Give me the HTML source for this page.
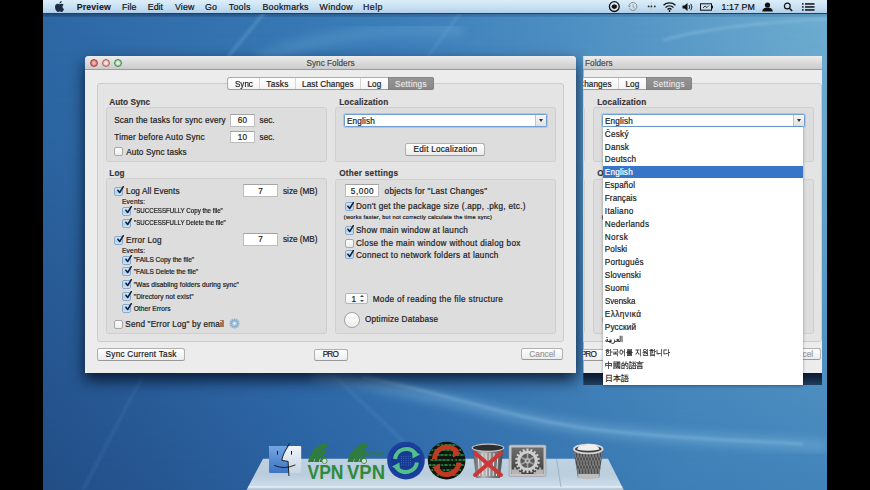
<!DOCTYPE html><html><head><meta charset='utf-8'><style>
html,body{margin:0;padding:0;width:870px;height:490px;overflow:hidden;background:#000}
.a{position:absolute}
.t{position:absolute;white-space:nowrap;font-family:'Liberation Sans',sans-serif;;-webkit-text-stroke:0.2px currentColor}
</style></head><body>
<div class='a' style='left:43px;top:0;width:784px;height:490px;overflow:hidden;background:#2e6aa6'>
<svg class='a' style='left:0;top:0' width='784' height='490'><defs><filter id='bl'><feGaussianBlur stdDeviation='5'/></filter><filter id='bl2'><feGaussianBlur stdDeviation='1.5'/></filter><filter id='bl3'><feGaussianBlur stdDeviation='3'/></filter><linearGradient id='gt' x1='0' y1='0' x2='1' y2='0'><stop offset='0' stop-color='#2d68a5'/><stop offset='0.45' stop-color='#3c7fbb'/><stop offset='0.75' stop-color='#5596c6'/><stop offset='1' stop-color='#6eadd0'/></linearGradient><linearGradient id='gb' x1='0' y1='0' x2='1' y2='0'><stop offset='0' stop-color='#224d85'/><stop offset='0.35' stop-color='#2b63a3'/><stop offset='0.82' stop-color='#3e7fb7'/><stop offset='1' stop-color='#4283ba'/></linearGradient><linearGradient id='gm' x1='0' y1='0' x2='0' y2='1'><stop offset='0' stop-color='#fff' stop-opacity='0'/><stop offset='0.3' stop-color='#fff' stop-opacity='0.15'/><stop offset='1' stop-color='#fff' stop-opacity='1'/></linearGradient><linearGradient id='tops' x1='0' y1='0' x2='1' y2='0'><stop offset='0' stop-color='#163b66' stop-opacity='0.7'/><stop offset='0.5' stop-color='#1d4a78' stop-opacity='0.5'/><stop offset='1' stop-color='#2a5f8a' stop-opacity='0.3'/></linearGradient><mask id='mk'><rect width='784' height='490' fill='url(#gm)'/></mask></defs><rect width='784' height='490' fill='url(#gt)'/><rect width='784' height='490' fill='url(#gb)' mask='url(#mk)'/><path d='M270 374 C380 390 470 420 557 430 S720 442 784 446' stroke='#80b8de' stroke-opacity='0.4' stroke-width='12' fill='none' filter='url(#bl)'/><path d='M320 377 C400 392 470 420 557 430 S700 440 760 444' stroke='#a6d0ea' stroke-opacity='0.35' stroke-width='2.5' fill='none' filter='url(#bl2)'/><path d='M287 372 L380 460' stroke='#6aa6d6' stroke-opacity='0.22' stroke-width='2.5' fill='none' filter='url(#bl2)'/><path d='M100 375 L40 490' stroke='#4d86c4' stroke-opacity='0.3' stroke-width='2.5' fill='none' filter='url(#bl2)'/><rect x='0' y='12' width='784' height='4.5' fill='url(#tops)' filter='url(#bl2)'/><path d='M184 58 L222 12' stroke='#8cc0e6' stroke-opacity='0.35' stroke-width='2.5' fill='none' filter='url(#bl2)'/><path d='M215 60 Q300 25 420 30' stroke='#79b3dc' stroke-opacity='0.25' stroke-width='14' fill='none' filter='url(#bl)'/><path d='M620 40 Q680 24 784 19' stroke='#d5eefa' stroke-opacity='0.45' stroke-width='1.2' fill='none' filter='url(#bl2)'/><path d='M384 58 L418 12' stroke='#8cc0e6' stroke-opacity='0.25' stroke-width='2' fill='none' filter='url(#bl2)'/></svg>
</div>
<div class='a' style='left:43px;top:0px;width:784.00px;height:13.00px;background:linear-gradient(#ddeefa,#c6dff2 60%,#b2cfe8);'></div>
<div class='a' style='left:43px;top:12.6px;width:784.00px;height:1.40px;background:#1f3f66'></div>
<div id='menu'>
<svg class='a' style='left:55.3px;top:1px' width='9' height='11' viewBox='0 0 814 1000'><path fill='#1c2c44' d='M788.1 340.9c-5.8 4.5-108.2 62.2-108.2 190.5 0 148.4 130.3 200.9 134.2 202.2-.6 3.2-20.7 71.9-68.7 141.9-42.8 61.6-87.5 123.1-155.5 123.1s-85.5-39.5-164-39.5c-76.5 0-103.7 40.8-165.9 40.8s-105.6-57-155.5-127C46.7 790.7 0 663 0 541.8c0-194.4 126.4-297.5 250.8-297.5 66.1 0 121.2 43.4 162.7 43.4 39.5 0 101.1-46 176.3-46 28.5 0 130.9 2.6 198.3 99.2zm-234-181.5c31.1-36.9 53.1-88.1 53.1-139.3 0-7.1-.6-14.3-1.9-20.1-50.6 1.9-110.8 33.7-147.1 75.8-28.5 32.4-55.1 83.6-55.1 135.5 0 7.8 1.3 15.6 1.9 18.1 3.2.6 8.4 1.3 13.6 1.3 45.4 0 102.5-30.4 135.5-71.3z'/></svg>
<div class='t' style='left:76.7px;top:3.00px;font-size:8.8px;line-height:8.8px;font-weight:700;color:#1a1a1a;letter-spacing:0.139px;-webkit-text-stroke:0.1px currentColor;'>Preview</div>
<div class='t' style='left:122px;top:3.00px;font-size:8.8px;line-height:8.8px;font-weight:400;color:#111;letter-spacing:0.104px;'>File</div>
<div class='t' style='left:147.8px;top:3.00px;font-size:8.8px;line-height:8.8px;font-weight:400;color:#111;letter-spacing:0.009px;'>Edit</div>
<div class='t' style='left:175px;top:3.00px;font-size:8.8px;line-height:8.8px;font-weight:400;color:#111;letter-spacing:0.126px;'>View</div>
<div class='t' style='left:205px;top:3.00px;font-size:8.8px;line-height:8.8px;font-weight:400;color:#111;letter-spacing:0.250px;'>Go</div>
<div class='t' style='left:228.7px;top:3.00px;font-size:8.8px;line-height:8.8px;font-weight:400;color:#111;letter-spacing:0.313px;'>Tools</div>
<div class='t' style='left:262.5px;top:3.00px;font-size:8.8px;line-height:8.8px;font-weight:400;color:#111;letter-spacing:0.250px;'>Bookmarks</div>
<div class='t' style='left:319.5px;top:3.00px;font-size:8.8px;line-height:8.8px;font-weight:400;color:#111;letter-spacing:0.341px;'>Window</div>
<div class='t' style='left:363px;top:3.00px;font-size:8.8px;line-height:8.8px;font-weight:400;color:#111;letter-spacing:0.469px;'>Help</div>
<div class='t' style='left:721.6px;top:3.00px;font-size:8.8px;line-height:8.8px;font-weight:400;color:#111;letter-spacing:0.089px;'>1:17 PM</div>
</div>
<div class='a' style='left:0;top:0;width:870px;height:490px'>
<div class='a' style='left:85px;top:56px;width:491.00px;height:316.60px;box-shadow:0 7px 15px rgba(0,8,25,0.8);border-radius:4px 4px 0 0'></div>
<div class='a' style='left:85px;top:56px;width:491.00px;height:316.60px;background:#ececec;border-radius:4px 4px 0 0;overflow:hidden'></div>
<div class='a' style='left:85px;top:56px;width:491.00px;height:13.30px;background:linear-gradient(#ececec,#dadada 55%,#cbcbcb);border-radius:4px 4px 0 0'></div>
<div class='a' style='left:85px;top:69.3px;width:491.00px;height:0.90px;background:#9a9a9a'></div>
<div class='a' style='left:89.9px;top:59.1px;width:8px;height:8px;border-radius:50%;box-sizing:border-box;border:0.9px solid #a8443e;background:radial-gradient(circle at 50% 50%,#eab4b0 0,#eab4b0 25%,#d0605a 80%)'></div>
<div class='a' style='left:102px;top:59.1px;width:8px;height:8px;border-radius:50%;box-sizing:border-box;border:0.9px solid #b0625c;background:radial-gradient(circle at 50% 50%,#f4e4e2 0,#f4e4e2 25%,#dc9a94 80%)'></div>
<div class='a' style='left:114.4px;top:59.1px;width:8px;height:8px;border-radius:50%;box-sizing:border-box;border:0.9px solid #3f8a4a;background:radial-gradient(circle at 50% 50%,#e4f0e6 0,#e4f0e6 25%,#86bc92 80%)'></div>
<div class='t' style='left:306.5px;top:60.00px;font-size:8.2px;line-height:8.2px;font-weight:400;color:#4a4a4a;letter-spacing:0.020px;'>Sync Folders</div>
<div class='a' style='left:97.2px;top:83.3px;width:466.60px;height:258.30px;background:#e4e4e4;border:1px solid #cdcdcd;border-radius:3px;box-sizing:border-box'></div>
<div class='a' style='left:227px;top:77.2px;width:207.00px;height:12.40px;background:linear-gradient(#ffffff,#f3f3f3);border:1px solid #ababab;border-bottom-color:#9c9c9c;border-radius:3px;box-sizing:border-box'></div>
<div class='a' style='left:388px;top:77.2px;width:46.00px;height:12.40px;background:linear-gradient(#969696,#868686);border-radius:0 3px 3px 0;box-shadow:inset 0 0 0 0.6px #7a7a7a'></div>
<div class='a' style='left:259px;top:78.4px;width:0.80px;height:10.20px;background:#d6d6d6'></div>
<div class='a' style='left:295px;top:78.4px;width:0.80px;height:10.20px;background:#d6d6d6'></div>
<div class='a' style='left:360px;top:78.4px;width:0.80px;height:10.20px;background:#d6d6d6'></div>
<div class='t' style='left:234.7px;top:81.00px;font-size:8.2px;line-height:8.2px;font-weight:400;color:#1c1c1c;letter-spacing:0.000px;transform:scaleX(0.9833);transform-origin:0 0;'>Sync</div>
<div class='t' style='left:266.3px;top:81.00px;font-size:8.2px;line-height:8.2px;font-weight:400;color:#1c1c1c;letter-spacing:0.266px;'>Tasks</div>
<div class='t' style='left:302px;top:81.00px;font-size:8.2px;line-height:8.2px;font-weight:400;color:#1c1c1c;letter-spacing:0.088px;'>Last Changes</div>
<div class='t' style='left:367.4px;top:81.00px;font-size:8.2px;line-height:8.2px;font-weight:400;color:#1c1c1c;letter-spacing:0.114px;'>Log</div>
<div class='t' style='left:395px;top:81.00px;font-size:8.2px;line-height:8.2px;font-weight:400;color:#eeeeee;letter-spacing:0.272px;-webkit-text-stroke:0.1px currentColor;'>Settings</div>
<div class='t' style='left:109.3px;top:99.00px;font-size:8.2px;line-height:8.2px;font-weight:700;color:#333333;letter-spacing:0.037px;-webkit-text-stroke:0.15px currentColor;'>Auto Sync</div>
<div class='a' style='left:105.5px;top:106.8px;width:221.10px;height:55.40px;background:#dddddd;border:1px solid #cfcfcf;border-radius:2.5px;box-sizing:border-box'></div>
<div class='t' style='left:114.2px;top:117.00px;font-size:8.2px;line-height:8.2px;font-weight:400;color:#1c1c1c;letter-spacing:0.163px;'>Scan the tasks for sync every</div>
<div class='a' style='left:230px;top:113.8px;width:24.70px;height:12.90px;background:#fff;border:1px solid #bdbdbd;border-top-color:#a3a3a3;box-sizing:border-box'></div>
<div class='t' style='left:230px;width:24.69999999999999px;text-align:center;top:117.00px;font-size:8.2px;line-height:8.2px;font-weight:400;color:#1c1c1c;letter-spacing:0.200px;text-indent:0.200px'>60</div>
<div class='t' style='left:259.6px;top:117.00px;font-size:8.2px;line-height:8.2px;font-weight:400;color:#1c1c1c;letter-spacing:-0.044px;'>sec.</div>
<div class='t' style='left:114.2px;top:134.00px;font-size:8.2px;line-height:8.2px;font-weight:400;color:#1c1c1c;letter-spacing:0.250px;'>Timer before Auto Sync</div>
<div class='a' style='left:230px;top:130.5px;width:24.70px;height:12.90px;background:#fff;border:1px solid #bdbdbd;border-top-color:#a3a3a3;box-sizing:border-box'></div>
<div class='t' style='left:230px;width:24.69999999999999px;text-align:center;top:134.00px;font-size:8.2px;line-height:8.2px;font-weight:400;color:#1c1c1c;letter-spacing:0.200px;text-indent:0.200px'>10</div>
<div class='t' style='left:259.6px;top:134.00px;font-size:8.2px;line-height:8.2px;font-weight:400;color:#1c1c1c;letter-spacing:-0.044px;'>sec.</div>
<div class='a' style='left:114.3px;top:147.3px;width:9px;height:9px;box-sizing:border-box;border:0.8px solid #a8a8a8;border-radius:2px;background:linear-gradient(#fdfdfd,#ececec)'></div>
<div class='t' style='left:126.2px;top:149.00px;font-size:8.2px;line-height:8.2px;font-weight:400;color:#1c1c1c;letter-spacing:0.127px;'>Auto Sync tasks</div>
<div class='t' style='left:339.2px;top:99.00px;font-size:8.2px;line-height:8.2px;font-weight:700;color:#333333;letter-spacing:0.153px;-webkit-text-stroke:0.15px currentColor;'>Localization</div>
<div class='a' style='left:334.5px;top:106.8px;width:221.40px;height:55.40px;background:#dddddd;border:1px solid #cfcfcf;border-radius:2.5px;box-sizing:border-box'></div>
<div class='a' style='left:344.2px;top:114.2px;width:202.40px;height:12.80px;background:#fff;border:1px solid #6f9fd4;box-shadow:0 0 0 1px #a9c8ea;border-radius:1.5px;box-sizing:border-box'></div>
<div class='a' style='left:536.1px;top:115.2px;width:9.50px;height:10.80px;background:linear-gradient(#f6f6f6,#e2e2e2)'></div>
<div class='a' style='left:535.3px;top:115.2px;width:0.80px;height:10.80px;background:#c4c4c4'></div>
<div class='t' style='left:347px;top:118.00px;font-size:8.2px;line-height:8.2px;font-weight:400;color:#1c1c1c;letter-spacing:0.157px;'>English</div>
<div class='a' style='left:539px;top:119.3px;width:0;height:0;border-left:2.6px solid transparent;border-right:2.6px solid transparent;border-top:3.4px solid #333'></div>
<div class='a' style='left:405.3px;top:142.5px;width:80.10px;height:13.00px;background:linear-gradient(#ffffff,#f5f5f5 50%,#ececec);border:1px solid #b0b0b0;border-bottom-color:#999;border-radius:2.5px;box-sizing:border-box'></div>
<div class='t' style='left:405.3px;width:80.09999999999997px;text-align:center;top:146.00px;font-size:8.2px;line-height:8.2px;font-weight:400;color:#1c1c1c;letter-spacing:0.242px;text-indent:0.242px'>Edit Localization</div>
<div class='t' style='left:109.3px;top:170.00px;font-size:8.2px;line-height:8.2px;font-weight:700;color:#333333;letter-spacing:0.092px;-webkit-text-stroke:0.15px currentColor;'>Log</div>
<div class='a' style='left:105.5px;top:178px;width:221.10px;height:155.80px;background:#dddddd;border:1px solid #cfcfcf;border-radius:2.5px;box-sizing:border-box'></div>
<div class='a' style='left:114.3px;top:186.6px;width:9px;height:9px;box-sizing:border-box;border:0.8px solid #88a8cc;border-radius:2px;background:linear-gradient(#d4e6f6,#b5d2ee 60%,#cfe4f7)'><svg width='12' height='12' viewBox='0 0 12 12' style='position:absolute;left:-0.8px;top:-0.8px;overflow:visible'><path d='M2.9 3.2 L4.7 5.5 L8.3 -0.3' fill='none' stroke='#13213a' stroke-width='1.55' stroke-linecap='round' stroke-linejoin='round'/></svg></div>
<div class='t' style='left:126px;top:188.00px;font-size:8.2px;line-height:8.2px;font-weight:400;color:#1c1c1c;letter-spacing:0.124px;'>Log All Events</div>
<div class='a' style='left:243.4px;top:184.3px;width:34.20px;height:12.90px;background:#fff;border:1px solid #bdbdbd;border-top-color:#a3a3a3;box-sizing:border-box'></div>
<div class='t' style='left:243.4px;width:34.20000000000002px;text-align:center;top:188.00px;font-size:8.2px;line-height:8.2px;font-weight:400;color:#1c1c1c;letter-spacing:0.200px;text-indent:0.200px'>7</div>
<div class='t' style='left:283px;top:188.00px;font-size:8.2px;line-height:8.2px;font-weight:400;color:#1c1c1c;letter-spacing:-0.010px;'>size (MB)</div>
<div class='t' style='left:122px;top:199.00px;font-size:6.6px;line-height:6.6px;font-weight:400;color:#1c1c1c;letter-spacing:0.200px;'>Events:</div>
<div class='a' style='left:122.3px;top:207.1px;width:9px;height:9px;box-sizing:border-box;border:0.8px solid #88a8cc;border-radius:2px;background:linear-gradient(#d4e6f6,#b5d2ee 60%,#cfe4f7)'><svg width='12' height='12' viewBox='0 0 12 12' style='position:absolute;left:-0.8px;top:-0.8px;overflow:visible'><path d='M2.9 3.2 L4.7 5.5 L8.3 -0.3' fill='none' stroke='#13213a' stroke-width='1.55' stroke-linecap='round' stroke-linejoin='round'/></svg></div>
<div class='t' style='left:133.7px;top:208.00px;font-size:6.6px;line-height:6.6px;font-weight:400;color:#1c1c1c;letter-spacing:0.000px;transform:scaleX(0.9350);transform-origin:0 0;'>"SUCCESSFULLY Copy the file"</div>
<div class='a' style='left:122.3px;top:219px;width:9px;height:9px;box-sizing:border-box;border:0.8px solid #88a8cc;border-radius:2px;background:linear-gradient(#d4e6f6,#b5d2ee 60%,#cfe4f7)'><svg width='12' height='12' viewBox='0 0 12 12' style='position:absolute;left:-0.8px;top:-0.8px;overflow:visible'><path d='M2.9 3.2 L4.7 5.5 L8.3 -0.3' fill='none' stroke='#13213a' stroke-width='1.55' stroke-linecap='round' stroke-linejoin='round'/></svg></div>
<div class='t' style='left:133.7px;top:220.00px;font-size:6.6px;line-height:6.6px;font-weight:400;color:#1c1c1c;letter-spacing:0.000px;transform:scaleX(0.9308);transform-origin:0 0;'>"SUCCESSFULLY Delete the file"</div>
<div class='a' style='left:114.3px;top:235.7px;width:9px;height:9px;box-sizing:border-box;border:0.8px solid #88a8cc;border-radius:2px;background:linear-gradient(#d4e6f6,#b5d2ee 60%,#cfe4f7)'><svg width='12' height='12' viewBox='0 0 12 12' style='position:absolute;left:-0.8px;top:-0.8px;overflow:visible'><path d='M2.9 3.2 L4.7 5.5 L8.3 -0.3' fill='none' stroke='#13213a' stroke-width='1.55' stroke-linecap='round' stroke-linejoin='round'/></svg></div>
<div class='t' style='left:126px;top:237.00px;font-size:8.2px;line-height:8.2px;font-weight:400;color:#1c1c1c;letter-spacing:0.170px;'>Error Log</div>
<div class='a' style='left:243.4px;top:233px;width:34.20px;height:12.80px;background:#fff;border:1px solid #bdbdbd;border-top-color:#a3a3a3;box-sizing:border-box'></div>
<div class='t' style='left:243.4px;width:34.20000000000002px;text-align:center;top:236.00px;font-size:8.2px;line-height:8.2px;font-weight:400;color:#1c1c1c;letter-spacing:0.200px;text-indent:0.200px'>7</div>
<div class='t' style='left:283px;top:236.00px;font-size:8.2px;line-height:8.2px;font-weight:400;color:#1c1c1c;letter-spacing:-0.010px;'>size (MB)</div>
<div class='t' style='left:122px;top:248.00px;font-size:6.6px;line-height:6.6px;font-weight:400;color:#1c1c1c;letter-spacing:0.200px;'>Events:</div>
<div class='a' style='left:122.3px;top:255.79999999999998px;width:9px;height:9px;box-sizing:border-box;border:0.8px solid #88a8cc;border-radius:2px;background:linear-gradient(#d4e6f6,#b5d2ee 60%,#cfe4f7)'><svg width='12' height='12' viewBox='0 0 12 12' style='position:absolute;left:-0.8px;top:-0.8px;overflow:visible'><path d='M2.9 3.2 L4.7 5.5 L8.3 -0.3' fill='none' stroke='#13213a' stroke-width='1.55' stroke-linecap='round' stroke-linejoin='round'/></svg></div>
<div class='t' style='left:133.7px;top:257.00px;font-size:6.6px;line-height:6.6px;font-weight:400;color:#1c1c1c;letter-spacing:-0.031px;'>"FAILS Copy the file"</div>
<div class='a' style='left:122.3px;top:267.0px;width:9px;height:9px;box-sizing:border-box;border:0.8px solid #88a8cc;border-radius:2px;background:linear-gradient(#d4e6f6,#b5d2ee 60%,#cfe4f7)'><svg width='12' height='12' viewBox='0 0 12 12' style='position:absolute;left:-0.8px;top:-0.8px;overflow:visible'><path d='M2.9 3.2 L4.7 5.5 L8.3 -0.3' fill='none' stroke='#13213a' stroke-width='1.55' stroke-linecap='round' stroke-linejoin='round'/></svg></div>
<div class='t' style='left:133.7px;top:269.00px;font-size:6.6px;line-height:6.6px;font-weight:400;color:#1c1c1c;letter-spacing:-0.013px;'>"FAILS Delete the file"</div>
<div class='a' style='left:122.3px;top:280.09999999999997px;width:9px;height:9px;box-sizing:border-box;border:0.8px solid #88a8cc;border-radius:2px;background:linear-gradient(#d4e6f6,#b5d2ee 60%,#cfe4f7)'><svg width='12' height='12' viewBox='0 0 12 12' style='position:absolute;left:-0.8px;top:-0.8px;overflow:visible'><path d='M2.9 3.2 L4.7 5.5 L8.3 -0.3' fill='none' stroke='#13213a' stroke-width='1.55' stroke-linecap='round' stroke-linejoin='round'/></svg></div>
<div class='t' style='left:133.7px;top:282.00px;font-size:6.6px;line-height:6.6px;font-weight:400;color:#1c1c1c;letter-spacing:0.074px;'>"Was disabling folders during sync"</div>
<div class='a' style='left:122.3px;top:292.0px;width:9px;height:9px;box-sizing:border-box;border:0.8px solid #88a8cc;border-radius:2px;background:linear-gradient(#d4e6f6,#b5d2ee 60%,#cfe4f7)'><svg width='12' height='12' viewBox='0 0 12 12' style='position:absolute;left:-0.8px;top:-0.8px;overflow:visible'><path d='M2.9 3.2 L4.7 5.5 L8.3 -0.3' fill='none' stroke='#13213a' stroke-width='1.55' stroke-linecap='round' stroke-linejoin='round'/></svg></div>
<div class='t' style='left:133.7px;top:294.00px;font-size:6.6px;line-height:6.6px;font-weight:400;color:#1c1c1c;letter-spacing:0.117px;'>"Directory not exist"</div>
<div class='a' style='left:122.3px;top:304.09999999999997px;width:9px;height:9px;box-sizing:border-box;border:0.8px solid #88a8cc;border-radius:2px;background:linear-gradient(#d4e6f6,#b5d2ee 60%,#cfe4f7)'><svg width='12' height='12' viewBox='0 0 12 12' style='position:absolute;left:-0.8px;top:-0.8px;overflow:visible'><path d='M2.9 3.2 L4.7 5.5 L8.3 -0.3' fill='none' stroke='#13213a' stroke-width='1.55' stroke-linecap='round' stroke-linejoin='round'/></svg></div>
<div class='t' style='left:133.7px;top:306.00px;font-size:6.6px;line-height:6.6px;font-weight:400;color:#1c1c1c;letter-spacing:0.047px;'>Other Errors</div>
<div class='a' style='left:114.3px;top:319.5px;width:9px;height:9px;box-sizing:border-box;border:0.8px solid #a8a8a8;border-radius:2px;background:linear-gradient(#fdfdfd,#ececec)'></div>
<div class='t' style='left:125.3px;top:321.00px;font-size:8.2px;line-height:8.2px;font-weight:400;color:#1c1c1c;letter-spacing:0.183px;'>Send "Error Log" by email</div>
<svg class='a' style='left:228.6px;top:318.2px' width='11' height='11' viewBox='0 0 22 22'><g fill='#8db1d5'><circle cx='11' cy='11' r='8'/><rect x='9.7' y='0.6' width='2.6' height='4.5' transform='rotate(0 11 11)'/><rect x='9.7' y='0.6' width='2.6' height='4.5' transform='rotate(30 11 11)'/><rect x='9.7' y='0.6' width='2.6' height='4.5' transform='rotate(60 11 11)'/><rect x='9.7' y='0.6' width='2.6' height='4.5' transform='rotate(90 11 11)'/><rect x='9.7' y='0.6' width='2.6' height='4.5' transform='rotate(120 11 11)'/><rect x='9.7' y='0.6' width='2.6' height='4.5' transform='rotate(150 11 11)'/><rect x='9.7' y='0.6' width='2.6' height='4.5' transform='rotate(180 11 11)'/><rect x='9.7' y='0.6' width='2.6' height='4.5' transform='rotate(210 11 11)'/><rect x='9.7' y='0.6' width='2.6' height='4.5' transform='rotate(240 11 11)'/><rect x='9.7' y='0.6' width='2.6' height='4.5' transform='rotate(270 11 11)'/><rect x='9.7' y='0.6' width='2.6' height='4.5' transform='rotate(300 11 11)'/><rect x='9.7' y='0.6' width='2.6' height='4.5' transform='rotate(330 11 11)'/></g><circle cx='11' cy='11' r='5' fill='#a9c6e2'/><circle cx='11' cy='11' r='2.4' fill='#eef4fa'/></svg>
<div class='t' style='left:339.2px;top:170.00px;font-size:8.2px;line-height:8.2px;font-weight:700;color:#333333;letter-spacing:0.253px;-webkit-text-stroke:0.15px currentColor;'>Other settings</div>
<div class='a' style='left:334.5px;top:178.7px;width:221.40px;height:155.60px;background:#dddddd;border:1px solid #cfcfcf;border-radius:2.5px;box-sizing:border-box'></div>
<div class='a' style='left:345px;top:184.4px;width:34.40px;height:13.00px;background:#fff;border:1px solid #bdbdbd;border-top-color:#a3a3a3;box-sizing:border-box'></div>
<div class='t' style='left:345px;width:34.39999999999998px;text-align:center;top:188.00px;font-size:8.2px;line-height:8.2px;font-weight:400;color:#1c1c1c;letter-spacing:0.575px;text-indent:0.575px'>5,000</div>
<div class='t' style='left:384.6px;top:188.00px;font-size:8.2px;line-height:8.2px;font-weight:400;color:#1c1c1c;letter-spacing:0.244px;'>objects for "Last Changes"</div>
<div class='a' style='left:345px;top:202.4px;width:9px;height:9px;box-sizing:border-box;border:0.8px solid #88a8cc;border-radius:2px;background:linear-gradient(#d4e6f6,#b5d2ee 60%,#cfe4f7)'><svg width='12' height='12' viewBox='0 0 12 12' style='position:absolute;left:-0.8px;top:-0.8px;overflow:visible'><path d='M2.9 3.2 L4.7 5.5 L8.3 -0.3' fill='none' stroke='#13213a' stroke-width='1.55' stroke-linecap='round' stroke-linejoin='round'/></svg></div>
<div class='t' style='left:355.9px;top:203.00px;font-size:8.2px;line-height:8.2px;font-weight:400;color:#1c1c1c;letter-spacing:0.269px;'>Don't get the package size (.app, .pkg, etc.)</div>
<div class='t' style='left:343.8px;top:215.00px;font-size:5.6px;line-height:5.6px;font-weight:400;color:#1c1c1c;letter-spacing:0.242px;'>(works faster, but not correctly calculate the time sync)</div>
<div class='a' style='left:345px;top:225.8px;width:9px;height:9px;box-sizing:border-box;border:0.8px solid #88a8cc;border-radius:2px;background:linear-gradient(#d4e6f6,#b5d2ee 60%,#cfe4f7)'><svg width='12' height='12' viewBox='0 0 12 12' style='position:absolute;left:-0.8px;top:-0.8px;overflow:visible'><path d='M2.9 3.2 L4.7 5.5 L8.3 -0.3' fill='none' stroke='#13213a' stroke-width='1.55' stroke-linecap='round' stroke-linejoin='round'/></svg></div>
<div class='t' style='left:355.9px;top:227.00px;font-size:8.2px;line-height:8.2px;font-weight:400;color:#1c1c1c;letter-spacing:0.256px;'>Show main window at launch</div>
<div class='a' style='left:344.8px;top:238.6px;width:9px;height:9px;box-sizing:border-box;border:0.8px solid #a8a8a8;border-radius:2px;background:linear-gradient(#fdfdfd,#ececec)'></div>
<div class='t' style='left:355.9px;top:240.00px;font-size:8.2px;line-height:8.2px;font-weight:400;color:#1c1c1c;letter-spacing:0.320px;'>Close the main window without dialog box</div>
<div class='a' style='left:345px;top:250.4px;width:9px;height:9px;box-sizing:border-box;border:0.8px solid #88a8cc;border-radius:2px;background:linear-gradient(#d4e6f6,#b5d2ee 60%,#cfe4f7)'><svg width='12' height='12' viewBox='0 0 12 12' style='position:absolute;left:-0.8px;top:-0.8px;overflow:visible'><path d='M2.9 3.2 L4.7 5.5 L8.3 -0.3' fill='none' stroke='#13213a' stroke-width='1.55' stroke-linecap='round' stroke-linejoin='round'/></svg></div>
<div class='t' style='left:355.9px;top:252.00px;font-size:8.2px;line-height:8.2px;font-weight:400;color:#1c1c1c;letter-spacing:0.274px;'>Connect to network folders at launch</div>
<div class='a' style='left:345px;top:293.3px;width:23.00px;height:11.10px;background:linear-gradient(#fff,#f2f2f2);border:1px solid #b5b5b5;border-radius:2px;box-sizing:border-box'></div>
<div class='t' style='left:351.5px;top:296.00px;font-size:8.2px;line-height:8.2px;font-weight:400;color:#1c1c1c;letter-spacing:0.200px;'>1</div>
<div class='a' style='left:359.5px;top:295.3px;width:0;height:0;border-left:2px solid transparent;border-right:2px solid transparent;border-bottom:2.6px solid #444'></div>
<div class='a' style='left:359.5px;top:299.6px;width:0;height:0;border-left:2px solid transparent;border-right:2px solid transparent;border-top:2.6px solid #444'></div>
<div class='t' style='left:372.7px;top:296.00px;font-size:8.2px;line-height:8.2px;font-weight:400;color:#1c1c1c;letter-spacing:0.318px;'>Mode of reading the file structure</div>
<div class='a' style='left:344px;top:311.8px;width:15.8px;height:15.8px;border-radius:50%;background:linear-gradient(#ffffff,#eeeeee);border:0.8px solid #a0a0a0;box-sizing:border-box'></div>
<div class='t' style='left:365px;top:316.00px;font-size:8.2px;line-height:8.2px;font-weight:400;color:#1c1c1c;letter-spacing:0.216px;'>Optimize Database</div>
<div class='a' style='left:97.2px;top:348px;width:87.60px;height:12.60px;background:linear-gradient(#ffffff,#f5f5f5 50%,#ececec);border:1px solid #b0b0b0;border-bottom-color:#999;border-radius:2.5px;box-sizing:border-box'></div>
<div class='t' style='left:97.2px;width:87.60000000000001px;text-align:center;top:351.00px;font-size:8.2px;line-height:8.2px;font-weight:400;color:#1c1c1c;letter-spacing:0.253px;text-indent:0.253px'>Sync Current Task</div>
<div class='a' style='left:314px;top:348.5px;width:33.50px;height:12.00px;background:linear-gradient(#ffffff,#f5f5f5 50%,#ececec);border:1px solid #b0b0b0;border-bottom-color:#999;border-radius:2.5px;box-sizing:border-box'></div>
<div class='t' style='left:314px;width:33.5px;text-align:center;top:351.00px;font-size:8.2px;line-height:8.2px;font-weight:400;color:#1c1c1c;letter-spacing:-0.825px;text-indent:-0.825px'>PRO</div>
<div class='a' style='left:521px;top:348.3px;width:42.40px;height:12.00px;background:linear-gradient(#ffffff,#f5f5f5 50%,#ececec);border:1px solid #b0b0b0;border-bottom-color:#999;border-radius:2.5px;box-sizing:border-box'></div>
<div class='t' style='left:521px;width:42.39999999999998px;text-align:center;top:351.00px;font-size:8.2px;line-height:8.2px;font-weight:400;color:#9a9a9a;letter-spacing:0.080px;text-indent:0.080px'>Cancel</div>
</div>
<div class='a' style='left:0;top:0;width:870px;height:490px;clip-path:inset(56px 48px 105px 583.4px);background:linear-gradient(#1e3c5d 373px,#2a4f72 385px)'>
<div class='a' style='left:258px;top:0;width:870px;height:490px'>
<div class='a' style='left:85px;top:56px;width:491.00px;height:316.60px;box-shadow:0 7px 15px rgba(0,8,25,0.8);border-radius:4px 4px 0 0'></div>
<div class='a' style='left:85px;top:56px;width:491.00px;height:316.60px;background:#ececec;border-radius:4px 4px 0 0;overflow:hidden'></div>
<div class='a' style='left:85px;top:56px;width:491.00px;height:13.30px;background:linear-gradient(#ececec,#dadada 55%,#cbcbcb);border-radius:4px 4px 0 0'></div>
<div class='a' style='left:85px;top:69.3px;width:491.00px;height:0.90px;background:#9a9a9a'></div>
<div class='a' style='left:89.9px;top:59.1px;width:8px;height:8px;border-radius:50%;box-sizing:border-box;border:0.9px solid #a8443e;background:radial-gradient(circle at 50% 50%,#eab4b0 0,#eab4b0 25%,#d0605a 80%)'></div>
<div class='a' style='left:102px;top:59.1px;width:8px;height:8px;border-radius:50%;box-sizing:border-box;border:0.9px solid #b0625c;background:radial-gradient(circle at 50% 50%,#f4e4e2 0,#f4e4e2 25%,#dc9a94 80%)'></div>
<div class='a' style='left:114.4px;top:59.1px;width:8px;height:8px;border-radius:50%;box-sizing:border-box;border:0.9px solid #3f8a4a;background:radial-gradient(circle at 50% 50%,#e4f0e6 0,#e4f0e6 25%,#86bc92 80%)'></div>
<div class='t' style='left:306.5px;top:60.00px;font-size:8.2px;line-height:8.2px;font-weight:400;color:#4a4a4a;letter-spacing:0.020px;'>Sync Folders</div>
<div class='a' style='left:97.2px;top:83.3px;width:466.60px;height:258.30px;background:#e4e4e4;border:1px solid #cdcdcd;border-radius:3px;box-sizing:border-box'></div>
<div class='a' style='left:227px;top:77.2px;width:207.00px;height:12.40px;background:linear-gradient(#ffffff,#f3f3f3);border:1px solid #ababab;border-bottom-color:#9c9c9c;border-radius:3px;box-sizing:border-box'></div>
<div class='a' style='left:388px;top:77.2px;width:46.00px;height:12.40px;background:linear-gradient(#969696,#868686);border-radius:0 3px 3px 0;box-shadow:inset 0 0 0 0.6px #7a7a7a'></div>
<div class='a' style='left:259px;top:78.4px;width:0.80px;height:10.20px;background:#d6d6d6'></div>
<div class='a' style='left:295px;top:78.4px;width:0.80px;height:10.20px;background:#d6d6d6'></div>
<div class='a' style='left:360px;top:78.4px;width:0.80px;height:10.20px;background:#d6d6d6'></div>
<div class='t' style='left:234.7px;top:81.00px;font-size:8.2px;line-height:8.2px;font-weight:400;color:#1c1c1c;letter-spacing:0.000px;transform:scaleX(0.9833);transform-origin:0 0;'>Sync</div>
<div class='t' style='left:266.3px;top:81.00px;font-size:8.2px;line-height:8.2px;font-weight:400;color:#1c1c1c;letter-spacing:0.266px;'>Tasks</div>
<div class='t' style='left:302px;top:81.00px;font-size:8.2px;line-height:8.2px;font-weight:400;color:#1c1c1c;letter-spacing:0.088px;'>Last Changes</div>
<div class='t' style='left:367.4px;top:81.00px;font-size:8.2px;line-height:8.2px;font-weight:400;color:#1c1c1c;letter-spacing:0.114px;'>Log</div>
<div class='t' style='left:395px;top:81.00px;font-size:8.2px;line-height:8.2px;font-weight:400;color:#eeeeee;letter-spacing:0.272px;-webkit-text-stroke:0.1px currentColor;'>Settings</div>
<div class='t' style='left:109.3px;top:99.00px;font-size:8.2px;line-height:8.2px;font-weight:700;color:#333333;letter-spacing:0.037px;-webkit-text-stroke:0.15px currentColor;'>Auto Sync</div>
<div class='a' style='left:105.5px;top:106.8px;width:221.10px;height:55.40px;background:#dddddd;border:1px solid #cfcfcf;border-radius:2.5px;box-sizing:border-box'></div>
<div class='t' style='left:114.2px;top:117.00px;font-size:8.2px;line-height:8.2px;font-weight:400;color:#1c1c1c;letter-spacing:0.163px;'>Scan the tasks for sync every</div>
<div class='a' style='left:230px;top:113.8px;width:24.70px;height:12.90px;background:#fff;border:1px solid #bdbdbd;border-top-color:#a3a3a3;box-sizing:border-box'></div>
<div class='t' style='left:230px;width:24.69999999999999px;text-align:center;top:117.00px;font-size:8.2px;line-height:8.2px;font-weight:400;color:#1c1c1c;letter-spacing:0.200px;text-indent:0.200px'>60</div>
<div class='t' style='left:259.6px;top:117.00px;font-size:8.2px;line-height:8.2px;font-weight:400;color:#1c1c1c;letter-spacing:-0.044px;'>sec.</div>
<div class='t' style='left:114.2px;top:134.00px;font-size:8.2px;line-height:8.2px;font-weight:400;color:#1c1c1c;letter-spacing:0.250px;'>Timer before Auto Sync</div>
<div class='a' style='left:230px;top:130.5px;width:24.70px;height:12.90px;background:#fff;border:1px solid #bdbdbd;border-top-color:#a3a3a3;box-sizing:border-box'></div>
<div class='t' style='left:230px;width:24.69999999999999px;text-align:center;top:134.00px;font-size:8.2px;line-height:8.2px;font-weight:400;color:#1c1c1c;letter-spacing:0.200px;text-indent:0.200px'>10</div>
<div class='t' style='left:259.6px;top:134.00px;font-size:8.2px;line-height:8.2px;font-weight:400;color:#1c1c1c;letter-spacing:-0.044px;'>sec.</div>
<div class='a' style='left:114.3px;top:147.3px;width:9px;height:9px;box-sizing:border-box;border:0.8px solid #a8a8a8;border-radius:2px;background:linear-gradient(#fdfdfd,#ececec)'></div>
<div class='t' style='left:126.2px;top:149.00px;font-size:8.2px;line-height:8.2px;font-weight:400;color:#1c1c1c;letter-spacing:0.127px;'>Auto Sync tasks</div>
<div class='t' style='left:339.2px;top:99.00px;font-size:8.2px;line-height:8.2px;font-weight:700;color:#333333;letter-spacing:0.153px;-webkit-text-stroke:0.15px currentColor;'>Localization</div>
<div class='a' style='left:334.5px;top:106.8px;width:221.40px;height:55.40px;background:#dddddd;border:1px solid #cfcfcf;border-radius:2.5px;box-sizing:border-box'></div>
<div class='a' style='left:344.2px;top:114.2px;width:202.40px;height:12.80px;background:#fff;border:1px solid #6f9fd4;box-shadow:0 0 0 1px #a9c8ea;border-radius:1.5px;box-sizing:border-box'></div>
<div class='a' style='left:536.1px;top:115.2px;width:9.50px;height:10.80px;background:linear-gradient(#f6f6f6,#e2e2e2)'></div>
<div class='a' style='left:535.3px;top:115.2px;width:0.80px;height:10.80px;background:#c4c4c4'></div>
<div class='t' style='left:347px;top:118.00px;font-size:8.2px;line-height:8.2px;font-weight:400;color:#1c1c1c;letter-spacing:0.157px;'>English</div>
<div class='a' style='left:539px;top:119.3px;width:0;height:0;border-left:2.6px solid transparent;border-right:2.6px solid transparent;border-top:3.4px solid #333'></div>
<div class='a' style='left:405.3px;top:142.5px;width:80.10px;height:13.00px;background:linear-gradient(#ffffff,#f5f5f5 50%,#ececec);border:1px solid #b0b0b0;border-bottom-color:#999;border-radius:2.5px;box-sizing:border-box'></div>
<div class='t' style='left:405.3px;width:80.09999999999997px;text-align:center;top:146.00px;font-size:8.2px;line-height:8.2px;font-weight:400;color:#1c1c1c;letter-spacing:0.242px;text-indent:0.242px'>Edit Localization</div>
<div class='t' style='left:109.3px;top:170.00px;font-size:8.2px;line-height:8.2px;font-weight:700;color:#333333;letter-spacing:0.092px;-webkit-text-stroke:0.15px currentColor;'>Log</div>
<div class='a' style='left:105.5px;top:178px;width:221.10px;height:155.80px;background:#dddddd;border:1px solid #cfcfcf;border-radius:2.5px;box-sizing:border-box'></div>
<div class='a' style='left:114.3px;top:186.6px;width:9px;height:9px;box-sizing:border-box;border:0.8px solid #88a8cc;border-radius:2px;background:linear-gradient(#d4e6f6,#b5d2ee 60%,#cfe4f7)'><svg width='12' height='12' viewBox='0 0 12 12' style='position:absolute;left:-0.8px;top:-0.8px;overflow:visible'><path d='M2.9 3.2 L4.7 5.5 L8.3 -0.3' fill='none' stroke='#13213a' stroke-width='1.55' stroke-linecap='round' stroke-linejoin='round'/></svg></div>
<div class='t' style='left:126px;top:188.00px;font-size:8.2px;line-height:8.2px;font-weight:400;color:#1c1c1c;letter-spacing:0.124px;'>Log All Events</div>
<div class='a' style='left:243.4px;top:184.3px;width:34.20px;height:12.90px;background:#fff;border:1px solid #bdbdbd;border-top-color:#a3a3a3;box-sizing:border-box'></div>
<div class='t' style='left:243.4px;width:34.20000000000002px;text-align:center;top:188.00px;font-size:8.2px;line-height:8.2px;font-weight:400;color:#1c1c1c;letter-spacing:0.200px;text-indent:0.200px'>7</div>
<div class='t' style='left:283px;top:188.00px;font-size:8.2px;line-height:8.2px;font-weight:400;color:#1c1c1c;letter-spacing:-0.010px;'>size (MB)</div>
<div class='t' style='left:122px;top:199.00px;font-size:6.6px;line-height:6.6px;font-weight:400;color:#1c1c1c;letter-spacing:0.200px;'>Events:</div>
<div class='a' style='left:122.3px;top:207.1px;width:9px;height:9px;box-sizing:border-box;border:0.8px solid #88a8cc;border-radius:2px;background:linear-gradient(#d4e6f6,#b5d2ee 60%,#cfe4f7)'><svg width='12' height='12' viewBox='0 0 12 12' style='position:absolute;left:-0.8px;top:-0.8px;overflow:visible'><path d='M2.9 3.2 L4.7 5.5 L8.3 -0.3' fill='none' stroke='#13213a' stroke-width='1.55' stroke-linecap='round' stroke-linejoin='round'/></svg></div>
<div class='t' style='left:133.7px;top:208.00px;font-size:6.6px;line-height:6.6px;font-weight:400;color:#1c1c1c;letter-spacing:0.000px;transform:scaleX(0.9350);transform-origin:0 0;'>"SUCCESSFULLY Copy the file"</div>
<div class='a' style='left:122.3px;top:219px;width:9px;height:9px;box-sizing:border-box;border:0.8px solid #88a8cc;border-radius:2px;background:linear-gradient(#d4e6f6,#b5d2ee 60%,#cfe4f7)'><svg width='12' height='12' viewBox='0 0 12 12' style='position:absolute;left:-0.8px;top:-0.8px;overflow:visible'><path d='M2.9 3.2 L4.7 5.5 L8.3 -0.3' fill='none' stroke='#13213a' stroke-width='1.55' stroke-linecap='round' stroke-linejoin='round'/></svg></div>
<div class='t' style='left:133.7px;top:220.00px;font-size:6.6px;line-height:6.6px;font-weight:400;color:#1c1c1c;letter-spacing:0.000px;transform:scaleX(0.9308);transform-origin:0 0;'>"SUCCESSFULLY Delete the file"</div>
<div class='a' style='left:114.3px;top:235.7px;width:9px;height:9px;box-sizing:border-box;border:0.8px solid #88a8cc;border-radius:2px;background:linear-gradient(#d4e6f6,#b5d2ee 60%,#cfe4f7)'><svg width='12' height='12' viewBox='0 0 12 12' style='position:absolute;left:-0.8px;top:-0.8px;overflow:visible'><path d='M2.9 3.2 L4.7 5.5 L8.3 -0.3' fill='none' stroke='#13213a' stroke-width='1.55' stroke-linecap='round' stroke-linejoin='round'/></svg></div>
<div class='t' style='left:126px;top:237.00px;font-size:8.2px;line-height:8.2px;font-weight:400;color:#1c1c1c;letter-spacing:0.170px;'>Error Log</div>
<div class='a' style='left:243.4px;top:233px;width:34.20px;height:12.80px;background:#fff;border:1px solid #bdbdbd;border-top-color:#a3a3a3;box-sizing:border-box'></div>
<div class='t' style='left:243.4px;width:34.20000000000002px;text-align:center;top:236.00px;font-size:8.2px;line-height:8.2px;font-weight:400;color:#1c1c1c;letter-spacing:0.200px;text-indent:0.200px'>7</div>
<div class='t' style='left:283px;top:236.00px;font-size:8.2px;line-height:8.2px;font-weight:400;color:#1c1c1c;letter-spacing:-0.010px;'>size (MB)</div>
<div class='t' style='left:122px;top:248.00px;font-size:6.6px;line-height:6.6px;font-weight:400;color:#1c1c1c;letter-spacing:0.200px;'>Events:</div>
<div class='a' style='left:122.3px;top:255.79999999999998px;width:9px;height:9px;box-sizing:border-box;border:0.8px solid #88a8cc;border-radius:2px;background:linear-gradient(#d4e6f6,#b5d2ee 60%,#cfe4f7)'><svg width='12' height='12' viewBox='0 0 12 12' style='position:absolute;left:-0.8px;top:-0.8px;overflow:visible'><path d='M2.9 3.2 L4.7 5.5 L8.3 -0.3' fill='none' stroke='#13213a' stroke-width='1.55' stroke-linecap='round' stroke-linejoin='round'/></svg></div>
<div class='t' style='left:133.7px;top:257.00px;font-size:6.6px;line-height:6.6px;font-weight:400;color:#1c1c1c;letter-spacing:-0.031px;'>"FAILS Copy the file"</div>
<div class='a' style='left:122.3px;top:267.0px;width:9px;height:9px;box-sizing:border-box;border:0.8px solid #88a8cc;border-radius:2px;background:linear-gradient(#d4e6f6,#b5d2ee 60%,#cfe4f7)'><svg width='12' height='12' viewBox='0 0 12 12' style='position:absolute;left:-0.8px;top:-0.8px;overflow:visible'><path d='M2.9 3.2 L4.7 5.5 L8.3 -0.3' fill='none' stroke='#13213a' stroke-width='1.55' stroke-linecap='round' stroke-linejoin='round'/></svg></div>
<div class='t' style='left:133.7px;top:269.00px;font-size:6.6px;line-height:6.6px;font-weight:400;color:#1c1c1c;letter-spacing:-0.013px;'>"FAILS Delete the file"</div>
<div class='a' style='left:122.3px;top:280.09999999999997px;width:9px;height:9px;box-sizing:border-box;border:0.8px solid #88a8cc;border-radius:2px;background:linear-gradient(#d4e6f6,#b5d2ee 60%,#cfe4f7)'><svg width='12' height='12' viewBox='0 0 12 12' style='position:absolute;left:-0.8px;top:-0.8px;overflow:visible'><path d='M2.9 3.2 L4.7 5.5 L8.3 -0.3' fill='none' stroke='#13213a' stroke-width='1.55' stroke-linecap='round' stroke-linejoin='round'/></svg></div>
<div class='t' style='left:133.7px;top:282.00px;font-size:6.6px;line-height:6.6px;font-weight:400;color:#1c1c1c;letter-spacing:0.074px;'>"Was disabling folders during sync"</div>
<div class='a' style='left:122.3px;top:292.0px;width:9px;height:9px;box-sizing:border-box;border:0.8px solid #88a8cc;border-radius:2px;background:linear-gradient(#d4e6f6,#b5d2ee 60%,#cfe4f7)'><svg width='12' height='12' viewBox='0 0 12 12' style='position:absolute;left:-0.8px;top:-0.8px;overflow:visible'><path d='M2.9 3.2 L4.7 5.5 L8.3 -0.3' fill='none' stroke='#13213a' stroke-width='1.55' stroke-linecap='round' stroke-linejoin='round'/></svg></div>
<div class='t' style='left:133.7px;top:294.00px;font-size:6.6px;line-height:6.6px;font-weight:400;color:#1c1c1c;letter-spacing:0.117px;'>"Directory not exist"</div>
<div class='a' style='left:122.3px;top:304.09999999999997px;width:9px;height:9px;box-sizing:border-box;border:0.8px solid #88a8cc;border-radius:2px;background:linear-gradient(#d4e6f6,#b5d2ee 60%,#cfe4f7)'><svg width='12' height='12' viewBox='0 0 12 12' style='position:absolute;left:-0.8px;top:-0.8px;overflow:visible'><path d='M2.9 3.2 L4.7 5.5 L8.3 -0.3' fill='none' stroke='#13213a' stroke-width='1.55' stroke-linecap='round' stroke-linejoin='round'/></svg></div>
<div class='t' style='left:133.7px;top:306.00px;font-size:6.6px;line-height:6.6px;font-weight:400;color:#1c1c1c;letter-spacing:0.047px;'>Other Errors</div>
<div class='a' style='left:114.3px;top:319.5px;width:9px;height:9px;box-sizing:border-box;border:0.8px solid #a8a8a8;border-radius:2px;background:linear-gradient(#fdfdfd,#ececec)'></div>
<div class='t' style='left:125.3px;top:321.00px;font-size:8.2px;line-height:8.2px;font-weight:400;color:#1c1c1c;letter-spacing:0.183px;'>Send "Error Log" by email</div>
<svg class='a' style='left:228.6px;top:318.2px' width='11' height='11' viewBox='0 0 22 22'><g fill='#8db1d5'><circle cx='11' cy='11' r='8'/><rect x='9.7' y='0.6' width='2.6' height='4.5' transform='rotate(0 11 11)'/><rect x='9.7' y='0.6' width='2.6' height='4.5' transform='rotate(30 11 11)'/><rect x='9.7' y='0.6' width='2.6' height='4.5' transform='rotate(60 11 11)'/><rect x='9.7' y='0.6' width='2.6' height='4.5' transform='rotate(90 11 11)'/><rect x='9.7' y='0.6' width='2.6' height='4.5' transform='rotate(120 11 11)'/><rect x='9.7' y='0.6' width='2.6' height='4.5' transform='rotate(150 11 11)'/><rect x='9.7' y='0.6' width='2.6' height='4.5' transform='rotate(180 11 11)'/><rect x='9.7' y='0.6' width='2.6' height='4.5' transform='rotate(210 11 11)'/><rect x='9.7' y='0.6' width='2.6' height='4.5' transform='rotate(240 11 11)'/><rect x='9.7' y='0.6' width='2.6' height='4.5' transform='rotate(270 11 11)'/><rect x='9.7' y='0.6' width='2.6' height='4.5' transform='rotate(300 11 11)'/><rect x='9.7' y='0.6' width='2.6' height='4.5' transform='rotate(330 11 11)'/></g><circle cx='11' cy='11' r='5' fill='#a9c6e2'/><circle cx='11' cy='11' r='2.4' fill='#eef4fa'/></svg>
<div class='t' style='left:339.2px;top:170.00px;font-size:8.2px;line-height:8.2px;font-weight:700;color:#333333;letter-spacing:0.253px;-webkit-text-stroke:0.15px currentColor;'>Other settings</div>
<div class='a' style='left:334.5px;top:178.7px;width:221.40px;height:155.60px;background:#dddddd;border:1px solid #cfcfcf;border-radius:2.5px;box-sizing:border-box'></div>
<div class='a' style='left:345px;top:184.4px;width:34.40px;height:13.00px;background:#fff;border:1px solid #bdbdbd;border-top-color:#a3a3a3;box-sizing:border-box'></div>
<div class='t' style='left:345px;width:34.39999999999998px;text-align:center;top:188.00px;font-size:8.2px;line-height:8.2px;font-weight:400;color:#1c1c1c;letter-spacing:0.575px;text-indent:0.575px'>5,000</div>
<div class='t' style='left:384.6px;top:188.00px;font-size:8.2px;line-height:8.2px;font-weight:400;color:#1c1c1c;letter-spacing:0.244px;'>objects for "Last Changes"</div>
<div class='a' style='left:345px;top:202.4px;width:9px;height:9px;box-sizing:border-box;border:0.8px solid #88a8cc;border-radius:2px;background:linear-gradient(#d4e6f6,#b5d2ee 60%,#cfe4f7)'><svg width='12' height='12' viewBox='0 0 12 12' style='position:absolute;left:-0.8px;top:-0.8px;overflow:visible'><path d='M2.9 3.2 L4.7 5.5 L8.3 -0.3' fill='none' stroke='#13213a' stroke-width='1.55' stroke-linecap='round' stroke-linejoin='round'/></svg></div>
<div class='t' style='left:355.9px;top:203.00px;font-size:8.2px;line-height:8.2px;font-weight:400;color:#1c1c1c;letter-spacing:0.269px;'>Don't get the package size (.app, .pkg, etc.)</div>
<div class='t' style='left:343.8px;top:215.00px;font-size:5.6px;line-height:5.6px;font-weight:400;color:#1c1c1c;letter-spacing:0.242px;'>(works faster, but not correctly calculate the time sync)</div>
<div class='a' style='left:345px;top:225.8px;width:9px;height:9px;box-sizing:border-box;border:0.8px solid #88a8cc;border-radius:2px;background:linear-gradient(#d4e6f6,#b5d2ee 60%,#cfe4f7)'><svg width='12' height='12' viewBox='0 0 12 12' style='position:absolute;left:-0.8px;top:-0.8px;overflow:visible'><path d='M2.9 3.2 L4.7 5.5 L8.3 -0.3' fill='none' stroke='#13213a' stroke-width='1.55' stroke-linecap='round' stroke-linejoin='round'/></svg></div>
<div class='t' style='left:355.9px;top:227.00px;font-size:8.2px;line-height:8.2px;font-weight:400;color:#1c1c1c;letter-spacing:0.256px;'>Show main window at launch</div>
<div class='a' style='left:344.8px;top:238.6px;width:9px;height:9px;box-sizing:border-box;border:0.8px solid #a8a8a8;border-radius:2px;background:linear-gradient(#fdfdfd,#ececec)'></div>
<div class='t' style='left:355.9px;top:240.00px;font-size:8.2px;line-height:8.2px;font-weight:400;color:#1c1c1c;letter-spacing:0.320px;'>Close the main window without dialog box</div>
<div class='a' style='left:345px;top:250.4px;width:9px;height:9px;box-sizing:border-box;border:0.8px solid #88a8cc;border-radius:2px;background:linear-gradient(#d4e6f6,#b5d2ee 60%,#cfe4f7)'><svg width='12' height='12' viewBox='0 0 12 12' style='position:absolute;left:-0.8px;top:-0.8px;overflow:visible'><path d='M2.9 3.2 L4.7 5.5 L8.3 -0.3' fill='none' stroke='#13213a' stroke-width='1.55' stroke-linecap='round' stroke-linejoin='round'/></svg></div>
<div class='t' style='left:355.9px;top:252.00px;font-size:8.2px;line-height:8.2px;font-weight:400;color:#1c1c1c;letter-spacing:0.274px;'>Connect to network folders at launch</div>
<div class='a' style='left:345px;top:293.3px;width:23.00px;height:11.10px;background:linear-gradient(#fff,#f2f2f2);border:1px solid #b5b5b5;border-radius:2px;box-sizing:border-box'></div>
<div class='t' style='left:351.5px;top:296.00px;font-size:8.2px;line-height:8.2px;font-weight:400;color:#1c1c1c;letter-spacing:0.200px;'>1</div>
<div class='a' style='left:359.5px;top:295.3px;width:0;height:0;border-left:2px solid transparent;border-right:2px solid transparent;border-bottom:2.6px solid #444'></div>
<div class='a' style='left:359.5px;top:299.6px;width:0;height:0;border-left:2px solid transparent;border-right:2px solid transparent;border-top:2.6px solid #444'></div>
<div class='t' style='left:372.7px;top:296.00px;font-size:8.2px;line-height:8.2px;font-weight:400;color:#1c1c1c;letter-spacing:0.318px;'>Mode of reading the file structure</div>
<div class='a' style='left:344px;top:311.8px;width:15.8px;height:15.8px;border-radius:50%;background:linear-gradient(#ffffff,#eeeeee);border:0.8px solid #a0a0a0;box-sizing:border-box'></div>
<div class='t' style='left:365px;top:316.00px;font-size:8.2px;line-height:8.2px;font-weight:400;color:#1c1c1c;letter-spacing:0.216px;'>Optimize Database</div>
<div class='a' style='left:97.2px;top:348px;width:87.60px;height:12.60px;background:linear-gradient(#ffffff,#f5f5f5 50%,#ececec);border:1px solid #b0b0b0;border-bottom-color:#999;border-radius:2.5px;box-sizing:border-box'></div>
<div class='t' style='left:97.2px;width:87.60000000000001px;text-align:center;top:351.00px;font-size:8.2px;line-height:8.2px;font-weight:400;color:#1c1c1c;letter-spacing:0.253px;text-indent:0.253px'>Sync Current Task</div>
<div class='a' style='left:314px;top:348.5px;width:33.50px;height:12.00px;background:linear-gradient(#ffffff,#f5f5f5 50%,#ececec);border:1px solid #b0b0b0;border-bottom-color:#999;border-radius:2.5px;box-sizing:border-box'></div>
<div class='t' style='left:314px;width:33.5px;text-align:center;top:351.00px;font-size:8.2px;line-height:8.2px;font-weight:400;color:#1c1c1c;letter-spacing:-0.825px;text-indent:-0.825px'>PRO</div>
<div class='a' style='left:521px;top:348.3px;width:42.40px;height:12.00px;background:linear-gradient(#ffffff,#f5f5f5 50%,#ececec);border:1px solid #b0b0b0;border-bottom-color:#999;border-radius:2.5px;box-sizing:border-box'></div>
<div class='t' style='left:521px;width:42.39999999999998px;text-align:center;top:351.00px;font-size:8.2px;line-height:8.2px;font-weight:400;color:#9a9a9a;letter-spacing:0.080px;text-indent:0.080px'>Cancel</div>
</div></div>
<div class='a' style='left:602.5px;top:126.5px;width:200.50px;height:258.00px;background:#fff;box-shadow:0 1px 3px rgba(0,0,0,0.35)'></div>
<div class='t' style='left:604.8px;top:131.00px;font-size:8.2px;line-height:8.2px;font-weight:400;color:#1c1c1c;letter-spacing:0.238px;'>Český</div>
<div class='t' style='left:604.8px;top:144.00px;font-size:8.2px;line-height:8.2px;font-weight:400;color:#1c1c1c;letter-spacing:0.195px;'>Dansk</div>
<div class='t' style='left:604.8px;top:156.00px;font-size:8.2px;line-height:8.2px;font-weight:400;color:#1c1c1c;letter-spacing:0.192px;'>Deutsch</div>
<div class='a' style='left:602.5px;top:166.17999999999998px;width:200.50px;height:11.50px;background:#3875c9'></div>
<div class='t' style='left:604.8px;top:169.00px;font-size:8.2px;line-height:8.2px;font-weight:400;color:#ffffff;letter-spacing:0.173px;'>English</div>
<div class='t' style='left:604.8px;top:182.00px;font-size:8.2px;line-height:8.2px;font-weight:400;color:#1c1c1c;letter-spacing:0.101px;'>Español</div>
<div class='t' style='left:604.8px;top:195.00px;font-size:8.2px;line-height:8.2px;font-weight:400;color:#1c1c1c;letter-spacing:0.056px;'>Français</div>
<div class='t' style='left:604.8px;top:208.00px;font-size:8.2px;line-height:8.2px;font-weight:400;color:#1c1c1c;letter-spacing:0.313px;'>Italiano</div>
<div class='t' style='left:604.8px;top:221.00px;font-size:8.2px;line-height:8.2px;font-weight:400;color:#1c1c1c;letter-spacing:0.258px;'>Nederlands</div>
<div class='t' style='left:604.8px;top:234.00px;font-size:8.2px;line-height:8.2px;font-weight:400;color:#1c1c1c;letter-spacing:0.402px;'>Norsk</div>
<div class='t' style='left:604.8px;top:246.00px;font-size:8.2px;line-height:8.2px;font-weight:400;color:#1c1c1c;letter-spacing:0.111px;'>Polski</div>
<div class='t' style='left:604.8px;top:259.00px;font-size:8.2px;line-height:8.2px;font-weight:400;color:#1c1c1c;letter-spacing:0.171px;'>Português</div>
<div class='t' style='left:604.8px;top:272.00px;font-size:8.2px;line-height:8.2px;font-weight:400;color:#1c1c1c;letter-spacing:0.132px;'>Slovenski</div>
<div class='t' style='left:604.8px;top:285.00px;font-size:8.2px;line-height:8.2px;font-weight:400;color:#1c1c1c;letter-spacing:0.195px;'>Suomi</div>
<div class='t' style='left:604.8px;top:298.00px;font-size:8.2px;line-height:8.2px;font-weight:400;color:#1c1c1c;letter-spacing:0.000px;transform:scaleX(0.9711);transform-origin:0 0;'>Svenska</div>
<div class='t' style='left:604.8px;top:311.00px;font-size:8.2px;line-height:8.2px;font-weight:400;color:#1c1c1c;letter-spacing:0.465px;'>Ελληνικά</div>
<div class='t' style='left:604.8px;top:324.00px;font-size:8.2px;line-height:8.2px;font-weight:400;color:#1c1c1c;letter-spacing:0.135px;'>Русский</div>
<div class='t' style='left:604.8px;top:336.00px;font-size:7.6px;line-height:7.6px;font-weight:400;color:#1c1c1c;letter-spacing:0.000px;transform:scaleX(0.9050);transform-origin:0 0;'>العربية</div>
<div class='t' style='left:604.8px;top:349.00px;font-size:7.6px;line-height:7.6px;font-weight:400;color:#1c1c1c;letter-spacing:0.000px;transform:scaleX(0.8702);transform-origin:0 0;'>한국어를 지원합니다</div>
<div class='t' style='left:604.8px;top:362.00px;font-size:7.6px;line-height:7.6px;font-weight:400;color:#1c1c1c;letter-spacing:0.000px;transform:scaleX(0.9825);transform-origin:0 0;'>中國的語言</div>
<div class='t' style='left:604.8px;top:375.00px;font-size:7.6px;line-height:7.6px;font-weight:400;color:#1c1c1c;letter-spacing:0.000px;'>日本語</div>
<svg class='a' style='left:0;top:0' width='870' height='490'><defs><linearGradient id='shelf' x1='0' y1='0' x2='0' y2='1'><stop offset='0' stop-color='#c6d7e5'/><stop offset='0.5' stop-color='#c0d2e0'/><stop offset='0.88' stop-color='#d6e2eb'/><stop offset='1' stop-color='#b4c7d6'/></linearGradient><linearGradient id='fl' x1='0' y1='0' x2='0' y2='1'><stop offset='0' stop-color='#74a6e0'/><stop offset='1' stop-color='#3c74c4'/></linearGradient><linearGradient id='fr' x1='0' y1='0' x2='0' y2='1'><stop offset='0' stop-color='#eef3f8'/><stop offset='1' stop-color='#c8d6e4'/></linearGradient><linearGradient id='metal' x1='0' y1='0' x2='1' y2='0'><stop offset='0' stop-color='#5a5a5a'/><stop offset='0.35' stop-color='#b9b9b9'/><stop offset='0.6' stop-color='#8a8a8a'/><stop offset='1' stop-color='#4a4a4a'/></linearGradient><clipPath id='dc'><circle cx='446.6' cy='460.6' r='18.6'/></clipPath><linearGradient id='spg' x1='0' y1='0' x2='0' y2='1'><stop offset='0' stop-color='#6e6e6e'/><stop offset='1' stop-color='#3e3e3e'/></linearGradient><clipPath id='sc'><rect x='511.5' y='447.5' width='32' height='26.5'/></clipPath><clipPath id='tc'><path d='M573.5 449 L603 449 L599 478 L578 478 Z'/></clipPath></defs><path d='M263 458.8 L608 458.8 L623.8 490 L246.5 490 Z' fill='url(#shelf)' opacity='0.95'/><path d='M248 487 L622.3 487' stroke='#f2f7fb' stroke-width='1.2'/><path d='M556.5 459 L561 487' stroke='#95abbd' stroke-width='0.8'/><rect x='269' y='446' width='32.2' height='27' rx='1.2' fill='url(#fr)'/><path d='M270.2 446 L289 446 C285.5 451.5 282.3 456 282 460.4 L288.1 461.4 L288.7 473 L270.2 473 Q269 473 269 471.8 L269 447.2 Q269 446 270.2 446 Z' fill='url(#fl)'/><path d='M289.5 443.3 C285.5 450 282.3 455.5 282 460.4 L288.1 461.4 L288.9 476' stroke='#111' stroke-width='0.9' fill='none'/><path d='M274.2 465.3 Q284 470 295.4 464.9' stroke='#111' stroke-width='0.9' fill='none'/><rect x='277' y='451' width='1' height='3.6' fill='#111'/><rect x='291' y='451' width='1' height='3.6' fill='#111'/><g fill='#2f7d38'><path d='M308 462 Q311 447 326 442.5 L327.5 447 Q316 451 313.5 462 Z'/><path d='M314 462 Q316.5 452 326 449 L326.5 453 Q320 455 319 462 Z'/><path d='M319.5 462 Q321 456 326 454.5 L326 458 Q323.5 459 323 462 Z'/></g><circle cx='324.5' cy='461' r='2.6' fill='#cfe0cf' stroke='#2f6f36' stroke-width='0.7'/><text x='307.5' y='478.6' font-family='Liberation Sans' font-weight='700' font-size='21' fill='#2f8a3c' textLength='36' lengthAdjust='spacingAndGlyphs'>VPN</text><g fill='#2f7d38'><path d='M347.5 462 Q350.5 447 366 442.5 L367.5 447 Q356 451 353 462 Z'/><path d='M353.5 462 Q356 452 366 449 L366.5 453 Q360 455 358.5 462 Z'/><path d='M359 462 Q360.5 456 366 454.5 L366 458 Q363 459 362.5 462 Z'/><path d='M365 455.5 Q371 451.5 375 453.5 T383.5 452' stroke='#2f7d38' stroke-width='1.6' fill='none'/></g><circle cx='364' cy='461' r='2.6' fill='#cfe0cf' stroke='#2f6f36' stroke-width='0.7'/><text x='347' y='478.6' font-family='Liberation Sans' font-weight='700' font-size='21' fill='#2f8a3c' textLength='38' lengthAdjust='spacingAndGlyphs'>VPN</text><circle cx='406' cy='460.6' r='18.8' fill='#1b3f9e'/><circle cx='406' cy='460.6' r='15' fill='#173a94'/><path d='M395 459 A11.5 11.5 0 0 1 415.5 453.5' stroke='#52c08c' stroke-width='4' fill='none'/><path d='M417 462.5 A11.5 11.5 0 0 1 396.5 467.5' stroke='#52c08c' stroke-width='4' fill='none'/><path d='M412 449.5 L420 454.5 L412.5 458.5 Z' fill='#52c08c'/><path d='M400 471.5 L392 466.5 L399.5 462.5 Z' fill='#52c08c'/><g fill='#6a8fd8'><circle cx='401.6' cy='456.20000000000005' r='0.45'/><circle cx='401.6' cy='458.40000000000003' r='0.45'/><circle cx='401.6' cy='460.6' r='0.45'/><circle cx='401.6' cy='462.8' r='0.45'/><circle cx='401.6' cy='465.0' r='0.45'/><circle cx='403.8' cy='456.20000000000005' r='0.45'/><circle cx='403.8' cy='458.40000000000003' r='0.45'/><circle cx='403.8' cy='460.6' r='0.45'/><circle cx='403.8' cy='462.8' r='0.45'/><circle cx='403.8' cy='465.0' r='0.45'/><circle cx='406.0' cy='456.20000000000005' r='0.45'/><circle cx='406.0' cy='458.40000000000003' r='0.45'/><circle cx='406.0' cy='460.6' r='0.45'/><circle cx='406.0' cy='462.8' r='0.45'/><circle cx='406.0' cy='465.0' r='0.45'/><circle cx='408.2' cy='456.20000000000005' r='0.45'/><circle cx='408.2' cy='458.40000000000003' r='0.45'/><circle cx='408.2' cy='460.6' r='0.45'/><circle cx='408.2' cy='462.8' r='0.45'/><circle cx='408.2' cy='465.0' r='0.45'/><circle cx='410.4' cy='456.20000000000005' r='0.45'/><circle cx='410.4' cy='458.40000000000003' r='0.45'/><circle cx='410.4' cy='460.6' r='0.45'/><circle cx='410.4' cy='462.8' r='0.45'/><circle cx='410.4' cy='465.0' r='0.45'/></g><circle cx='446.6' cy='460.6' r='18.8' fill='#101510'/><g clip-path='url(#dc)'><text x='428' y='446' font-family='Liberation Mono' font-size='4.4' font-weight='700' fill='#2aa040' textLength='36' lengthAdjust='spacingAndGlyphs'>110100001</text><text x='430' y='451' font-family='Liberation Mono' font-size='4.4' font-weight='700' fill='#2aa040' textLength='36' lengthAdjust='spacingAndGlyphs'>101000011</text><text x='428' y='456' font-family='Liberation Mono' font-size='4.4' font-weight='700' fill='#2aa040' textLength='36' lengthAdjust='spacingAndGlyphs'>010001000</text><text x='430' y='461' font-family='Liberation Mono' font-size='4.4' font-weight='700' fill='#2aa040' textLength='36' lengthAdjust='spacingAndGlyphs'>000001100</text><text x='428' y='466' font-family='Liberation Mono' font-size='4.4' font-weight='700' fill='#2aa040' textLength='36' lengthAdjust='spacingAndGlyphs'>001101100</text><text x='430' y='471' font-family='Liberation Mono' font-size='4.4' font-weight='700' fill='#2aa040' textLength='36' lengthAdjust='spacingAndGlyphs'>101101011</text><text x='428' y='476' font-family='Liberation Mono' font-size='4.4' font-weight='700' fill='#2aa040' textLength='36' lengthAdjust='spacingAndGlyphs'>111011001</text><text x='430' y='481' font-family='Liberation Mono' font-size='4.4' font-weight='700' fill='#2aa040' textLength='36' lengthAdjust='spacingAndGlyphs'>011011101</text></g><path d='M434.5 459 A12.3 12.3 0 0 1 457 452.5' stroke='#bf3a24' stroke-width='5.2' fill='none'/><path d='M458.8 462.5 A12.3 12.3 0 0 1 436 468.5' stroke='#bf3a24' stroke-width='5.2' fill='none'/><path d='M453 448 L461 453.5 L453 457.5 Z' fill='#bf3a24'/><path d='M440 473 L432 467.5 L440 463.5 Z' fill='#bf3a24'/><path d='M472.5 448 L503.5 448 L500 478 L476 478 Z' fill='url(#metal)'/><g stroke='#e6e6e6' stroke-width='1'><path d='M478 453 L479.5 476'/><path d='M482 453 L482.9 476'/><path d='M486 453 L486.3 476'/><path d='M490 453 L489.7 476'/><path d='M494 453 L493.1 476'/><path d='M498 453 L496.5 476'/></g><ellipse cx='488' cy='447.8' rx='15.8' ry='3.6' fill='#2e2e2e' stroke='#c4c4c4' stroke-width='1.2'/><path d='M475 453 L501 475 M501 453 L475 475' stroke='#cc3838' stroke-width='4' stroke-linecap='round'/><rect x='509' y='445' width='37' height='31.5' rx='1.5' fill='#c4c4c4' stroke='#9a9a9a' stroke-width='0.6'/><rect x='511.5' y='447.5' width='32' height='26.5' fill='url(#spg)'/><g clip-path='url(#sc)'><circle cx='515' cy='474' r='4.8' fill='#b5b5b5'/><rect x='514.1' y='467.5' width='1.8' height='2.2' fill='#b5b5b5' transform='rotate(0.0 515 474)'/><rect x='514.1' y='467.5' width='1.8' height='2.2' fill='#b5b5b5' transform='rotate(40.0 515 474)'/><rect x='514.1' y='467.5' width='1.8' height='2.2' fill='#b5b5b5' transform='rotate(80.0 515 474)'/><rect x='514.1' y='467.5' width='1.8' height='2.2' fill='#b5b5b5' transform='rotate(120.0 515 474)'/><rect x='514.1' y='467.5' width='1.8' height='2.2' fill='#b5b5b5' transform='rotate(160.0 515 474)'/><rect x='514.1' y='467.5' width='1.8' height='2.2' fill='#b5b5b5' transform='rotate(200.0 515 474)'/><rect x='514.1' y='467.5' width='1.8' height='2.2' fill='#b5b5b5' transform='rotate(240.0 515 474)'/><rect x='514.1' y='467.5' width='1.8' height='2.2' fill='#b5b5b5' transform='rotate(280.0 515 474)'/><rect x='514.1' y='467.5' width='1.8' height='2.2' fill='#b5b5b5' transform='rotate(320.0 515 474)'/><circle cx='540' cy='474' r='4.8' fill='#b5b5b5'/><rect x='539.1' y='467.5' width='1.8' height='2.2' fill='#b5b5b5' transform='rotate(0.0 540 474)'/><rect x='539.1' y='467.5' width='1.8' height='2.2' fill='#b5b5b5' transform='rotate(40.0 540 474)'/><rect x='539.1' y='467.5' width='1.8' height='2.2' fill='#b5b5b5' transform='rotate(80.0 540 474)'/><rect x='539.1' y='467.5' width='1.8' height='2.2' fill='#b5b5b5' transform='rotate(120.0 540 474)'/><rect x='539.1' y='467.5' width='1.8' height='2.2' fill='#b5b5b5' transform='rotate(160.0 540 474)'/><rect x='539.1' y='467.5' width='1.8' height='2.2' fill='#b5b5b5' transform='rotate(200.0 540 474)'/><rect x='539.1' y='467.5' width='1.8' height='2.2' fill='#b5b5b5' transform='rotate(240.0 540 474)'/><rect x='539.1' y='467.5' width='1.8' height='2.2' fill='#b5b5b5' transform='rotate(280.0 540 474)'/><rect x='539.1' y='467.5' width='1.8' height='2.2' fill='#b5b5b5' transform='rotate(320.0 540 474)'/><circle cx='527.5' cy='460.8' r='10.3' fill='#cfcfcf'/><rect x='526.5' y='448.5' width='2.0' height='2.5' fill='#cfcfcf' transform='rotate(0.0 527.5 460.8)'/><rect x='526.5' y='448.5' width='2.0' height='2.5' fill='#cfcfcf' transform='rotate(20.0 527.5 460.8)'/><rect x='526.5' y='448.5' width='2.0' height='2.5' fill='#cfcfcf' transform='rotate(40.0 527.5 460.8)'/><rect x='526.5' y='448.5' width='2.0' height='2.5' fill='#cfcfcf' transform='rotate(60.0 527.5 460.8)'/><rect x='526.5' y='448.5' width='2.0' height='2.5' fill='#cfcfcf' transform='rotate(80.0 527.5 460.8)'/><rect x='526.5' y='448.5' width='2.0' height='2.5' fill='#cfcfcf' transform='rotate(100.0 527.5 460.8)'/><rect x='526.5' y='448.5' width='2.0' height='2.5' fill='#cfcfcf' transform='rotate(120.0 527.5 460.8)'/><rect x='526.5' y='448.5' width='2.0' height='2.5' fill='#cfcfcf' transform='rotate(140.0 527.5 460.8)'/><rect x='526.5' y='448.5' width='2.0' height='2.5' fill='#cfcfcf' transform='rotate(160.0 527.5 460.8)'/><rect x='526.5' y='448.5' width='2.0' height='2.5' fill='#cfcfcf' transform='rotate(180.0 527.5 460.8)'/><rect x='526.5' y='448.5' width='2.0' height='2.5' fill='#cfcfcf' transform='rotate(200.0 527.5 460.8)'/><rect x='526.5' y='448.5' width='2.0' height='2.5' fill='#cfcfcf' transform='rotate(220.0 527.5 460.8)'/><rect x='526.5' y='448.5' width='2.0' height='2.5' fill='#cfcfcf' transform='rotate(240.0 527.5 460.8)'/><rect x='526.5' y='448.5' width='2.0' height='2.5' fill='#cfcfcf' transform='rotate(260.0 527.5 460.8)'/><rect x='526.5' y='448.5' width='2.0' height='2.5' fill='#cfcfcf' transform='rotate(280.0 527.5 460.8)'/><rect x='526.5' y='448.5' width='2.0' height='2.5' fill='#cfcfcf' transform='rotate(300.0 527.5 460.8)'/><rect x='526.5' y='448.5' width='2.0' height='2.5' fill='#cfcfcf' transform='rotate(320.0 527.5 460.8)'/><rect x='526.5' y='448.5' width='2.0' height='2.5' fill='#cfcfcf' transform='rotate(340.0 527.5 460.8)'/></g><circle cx='527.5' cy='460.8' r='7.2' fill='#5a5a5a'/><path d='M527.5 453.6 V468 M521.3 457.2 L533.7 464.4 M521.3 464.4 L533.7 457.2' stroke='#a5a5a5' stroke-width='1.6'/><circle cx='527.5' cy='460.8' r='2.8' fill='#b9b9b9'/><circle cx='527.5' cy='460.8' r='1.1' fill='#6a6a6a'/><path d='M573.5 449 L603 449 L599 478 L578 478 Z' fill='#4a4a4a'/><g clip-path='url(#tc)'><path d='M565 452 L574 477' stroke='#9a9a9a' stroke-width='0.7'/><path d='M612 452 L603 477' stroke='#8a8a8a' stroke-width='0.7'/><path d='M568 452 L577 477' stroke='#9a9a9a' stroke-width='0.7'/><path d='M609 452 L600 477' stroke='#8a8a8a' stroke-width='0.7'/><path d='M571 452 L580 477' stroke='#9a9a9a' stroke-width='0.7'/><path d='M606 452 L597 477' stroke='#8a8a8a' stroke-width='0.7'/><path d='M574 452 L583 477' stroke='#9a9a9a' stroke-width='0.7'/><path d='M603 452 L594 477' stroke='#8a8a8a' stroke-width='0.7'/><path d='M577 452 L586 477' stroke='#9a9a9a' stroke-width='0.7'/><path d='M600 452 L591 477' stroke='#8a8a8a' stroke-width='0.7'/><path d='M580 452 L589 477' stroke='#9a9a9a' stroke-width='0.7'/><path d='M597 452 L588 477' stroke='#8a8a8a' stroke-width='0.7'/><path d='M583 452 L592 477' stroke='#9a9a9a' stroke-width='0.7'/><path d='M594 452 L585 477' stroke='#8a8a8a' stroke-width='0.7'/><path d='M586 452 L595 477' stroke='#9a9a9a' stroke-width='0.7'/><path d='M591 452 L582 477' stroke='#8a8a8a' stroke-width='0.7'/><path d='M589 452 L598 477' stroke='#9a9a9a' stroke-width='0.7'/><path d='M588 452 L579 477' stroke='#8a8a8a' stroke-width='0.7'/><path d='M592 452 L601 477' stroke='#9a9a9a' stroke-width='0.7'/><path d='M585 452 L576 477' stroke='#8a8a8a' stroke-width='0.7'/><path d='M595 452 L604 477' stroke='#9a9a9a' stroke-width='0.7'/><path d='M582 452 L573 477' stroke='#8a8a8a' stroke-width='0.7'/><path d='M598 452 L607 477' stroke='#9a9a9a' stroke-width='0.7'/><path d='M579 452 L570 477' stroke='#8a8a8a' stroke-width='0.7'/><path d='M601 452 L610 477' stroke='#9a9a9a' stroke-width='0.7'/><path d='M576 452 L567 477' stroke='#8a8a8a' stroke-width='0.7'/><path d='M604 452 L613 477' stroke='#9a9a9a' stroke-width='0.7'/><path d='M573 452 L564 477' stroke='#8a8a8a' stroke-width='0.7'/></g><ellipse cx='588.3' cy='449' rx='14.3' ry='4.4' fill='#3c3c3c' stroke='#d9d9d9' stroke-width='1.8'/><path d='M577 449.5 Q579 444 584 445.5 Q588 442.5 592 445 Q597 444 599.5 449.5 Q588 452 577 449.5 Z' fill='#efefef'/><path d='M578 474 L599 474 L598.8 478 Q588.5 480 578.2 478 Z' fill='#bdbdbd'/></svg>
<svg class='a' style='left:0;top:0' width='870' height='14'><circle cx='614.3' cy='6.6' r='4.9' fill='none' stroke='#111' stroke-width='1.3'/><circle cx='614.3' cy='6.6' r='2.6' fill='#111'/><path d='M611.6 5.6 A2.9 2.9 0 0 1 616.8 5.2' stroke='#fff' stroke-width='0.8' fill='none'/><path d='M617 7.6 A2.9 2.9 0 0 1 611.8 8' stroke='#fff' stroke-width='0.8' fill='none'/><path d='M629.5 8.5 A4 4 0 1 0 629.2 5' stroke='#8d8d8d' stroke-width='1' fill='none'/><path d='M627.8 5.5 L630.8 5.5 L629.3 7.5 Z' fill='#8d8d8d'/><path d='M633 4.2 V6.8 L634.8 8.2' stroke='#8d8d8d' stroke-width='0.8' fill='none'/><path d='M651.4 2 V11' stroke='#b9c6cf' stroke-width='0.7'/><circle cx='648.6' cy='6.4' r='0.9' fill='#222'/><circle cx='651.4' cy='6.4' r='0.9' fill='#222'/><circle cx='654.8' cy='6.4' r='0.9' fill='#222'/><path d='M663.5 5.2 A9 9 0 0 1 675.5 5.2' stroke='#111' stroke-width='1.3' fill='none'/><path d='M665.5 7.4 A6 6 0 0 1 673.5 7.4' stroke='#111' stroke-width='1.3' fill='none'/><path d='M667.5 9.4 A3 3 0 0 1 671.5 9.4' stroke='#111' stroke-width='1.3' fill='none'/><circle cx='669.5' cy='11' r='0.9' fill='#111'/><path d='M682.5 5.5 H684.5 L687.5 3 V11 L684.5 8.5 H682.5 Z' fill='#111'/><path d='M689 5 Q690.5 7 689 9 M690.8 3.8 Q693 7 690.8 10.2' stroke='#111' stroke-width='0.9' fill='none'/><rect x='700.5' y='3.8' width='11' height='6.4' fill='none' stroke='#111' stroke-width='1'/><rect x='711.8' y='5.6' width='1.2' height='2.8' fill='#111'/><path d='M703 8 L705 6 L707 7.5 L709 5.5' stroke='#111' stroke-width='0.8' fill='none'/><circle cx='767.5' cy='5' r='2.6' fill='#111'/><path d='M762.2 11.5 Q762.5 7.8 767.5 7.6 Q772.5 7.8 772.8 11.5 Z' fill='#111'/><circle cx='787.3' cy='6' r='2.9' fill='none' stroke='#111' stroke-width='1.2'/><path d='M789.4 8.2 L792.2 11' stroke='#111' stroke-width='1.4'/><rect x='802' y='3.2' width='1.6' height='1.5' fill='#111'/><rect x='802' y='6.2' width='1.6' height='1.5' fill='#111'/><rect x='802' y='9.2' width='1.6' height='1.5' fill='#111'/><rect x='805' y='3.2' width='9.5' height='1.5' fill='#111'/><rect x='805' y='6.2' width='9.5' height='1.5' fill='#111'/><rect x='805' y='9.2' width='9.5' height='1.5' fill='#111'/></svg>
</body></html>
